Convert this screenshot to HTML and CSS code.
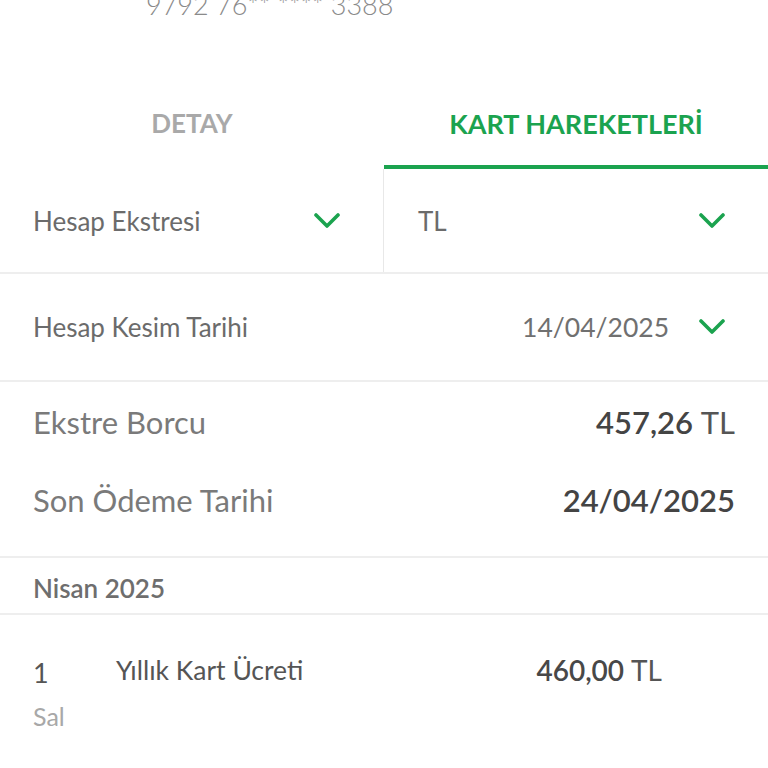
FILE: index.html
```html
<!DOCTYPE html>
<html lang="tr">
  <head>
    <meta charset="UTF-8" />
    <meta name="viewport" content="width=device-width, initial-scale=1.0" />
    <title>Kart Hareketleri</title>
    <link rel="stylesheet" href="styles.css">
  </head>
  <body>
    <div class="card-head">
      <div class="card-number">9792 76** **** 3388</div>
    </div>

    <ul class="tabs">
      <li class="tab">DETAY</li>
      <li class="tab active">KART HAREKETLERİ</li>
    </ul>

    <div class="filters">
      <div class="select">
        <span>Hesap Ekstresi</span>
        <svg class="chevron" viewBox="0 0 26 16"><path d="M2 2 L13 13 L24 2" /></svg>
      </div>
      <div class="select">
        <span>TL</span>
        <svg class="chevron" viewBox="0 0 26 16"><path d="M2 2 L13 13 L24 2" /></svg>
      </div>
    </div>

    <div class="cut-date">
      <span class="label">Hesap Kesim Tarihi</span>
      <span class="picker">
        <span class="date">14/04/2025</span>
        <svg class="chevron" viewBox="0 0 26 16"><path d="M2 2 L13 13 L24 2" /></svg>
      </span>
    </div>

    <div class="summary">
      <div class="summary-row">
        <span class="summary-label">Ekstre Borcu</span>
        <span class="summary-value">457,26 <small>TL</small></span>
      </div>
      <div class="summary-row">
        <span class="summary-label">Son Ödeme Tarihi</span>
        <span class="summary-value">24/04/2025</span>
      </div>
    </div>

    <div class="month">Nisan 2025</div>

    <ul class="transactions">
      <li class="transaction">
        <div class="day">
          <span class="day-num">1</span>
          <span class="day-name">Sal</span>
        </div>
        <div class="desc">Yıllık Kart Ücreti</div>
        <div class="amount">460,00 <small>TL</small></div>
      </li>
    </ul>
  </body>
</html>
```

FILE: styles.css
```css
/* reset */
body,
ul,
li {
  margin: 0;
  padding: 0;
}

li {
  list-style-type: none;
}

body {
  width: 768px;
  font-family: Lato, "Open Sans", sans-serif;
  color: #6b6b6b;
  background-color: #fff;
  overflow: hidden;
}

.card-head {
  display: flow-root;
  height: 79px;
}

.card-number {
  margin-top: -12px;
  padding-left: 146px;
  font-size: 27px;
  font-weight: 300;
  color: #8a8a8a;
  line-height: 34px;
}

/* tabs */
.tabs {
  display: flex;
  height: 90px;
}

.tab {
  flex: 1;
  display: flex;
  align-items: center;
  justify-content: center;
  padding-top: 2px;
  font-size: 26px;
  font-weight: 700;
  color: #a9a9a9;
  border-bottom: 4px solid transparent;
}

.tab.active {
  font-size: 27px;
  color: #1ba34f;
  border-bottom-color: #1ba34f;
}

.chevron {
  width: 26px;
  height: 16px;
  fill: none;
  stroke: #1ba34f;
  stroke-width: 3.6;
  stroke-linecap: round;
  stroke-linejoin: round;
}

/* filters */
.filters {
  display: flex;
  height: 103px;
  border-bottom: 2px solid #eeeeee;
}

.select {
  flex: 1;
  display: flex;
  align-items: center;
  justify-content: space-between;
  padding: 0 43px 0 33px;
  font-size: 26px;
}

.select + .select {
  border-left: 1px solid #e8e8e8;
  padding-left: 34px;
}

.cut-date {
  display: flex;
  align-items: center;
  justify-content: space-between;
  height: 106px;
  padding: 0 43px 0 33px;
  font-size: 26px;
  border-bottom: 2px solid #eeeeee;
}

.picker {
  display: flex;
  align-items: center;
  gap: 30px;
}

.date {
  font-size: 26.5px;
  color: #707070;
}

/* summary */
.summary {
  display: flex;
  flex-direction: column;
  gap: 42px;
  padding: 22px 33px 38px;
  border-bottom: 2px solid #eeeeee;
}

.summary-row {
  display: flex;
  justify-content: space-between;
  align-items: baseline;
  line-height: 36px;
}

.summary-label {
  font-size: 31px;
  color: #7a7a7a;
}

.summary-value {
  font-size: 31px;
  font-weight: 600;
  color: #444;
}

.summary-value small,
.amount small {
  font-size: inherit;
  font-weight: 400;
  color: #555;
}

.month {
  height: 55px;
  line-height: 60px;
  padding-left: 33px;
  font-size: 26px;
  font-weight: 600;
  color: #6e6e6e;
  border-bottom: 2px solid #eeeeee;
}

/* transactions */
.transaction {
  display: flex;
  align-items: flex-start;
  padding: 38px 106px 0 33px;
}

.day {
  display: flex;
  flex-direction: column;
  gap: 8px;
  width: 83px;
}

.day-num {
  font-size: 27px;
  color: #555;
  line-height: 40px;
}

.day-name {
  font-size: 25px;
  color: #a8a8a8;
  line-height: 30px;
}

.desc {
  flex: 1;
  font-size: 26.5px;
  color: #555;
  line-height: 34px;
}

.amount {
  font-size: 28px;
  font-weight: 600;
  color: #484848;
  line-height: 34px;
}
```
